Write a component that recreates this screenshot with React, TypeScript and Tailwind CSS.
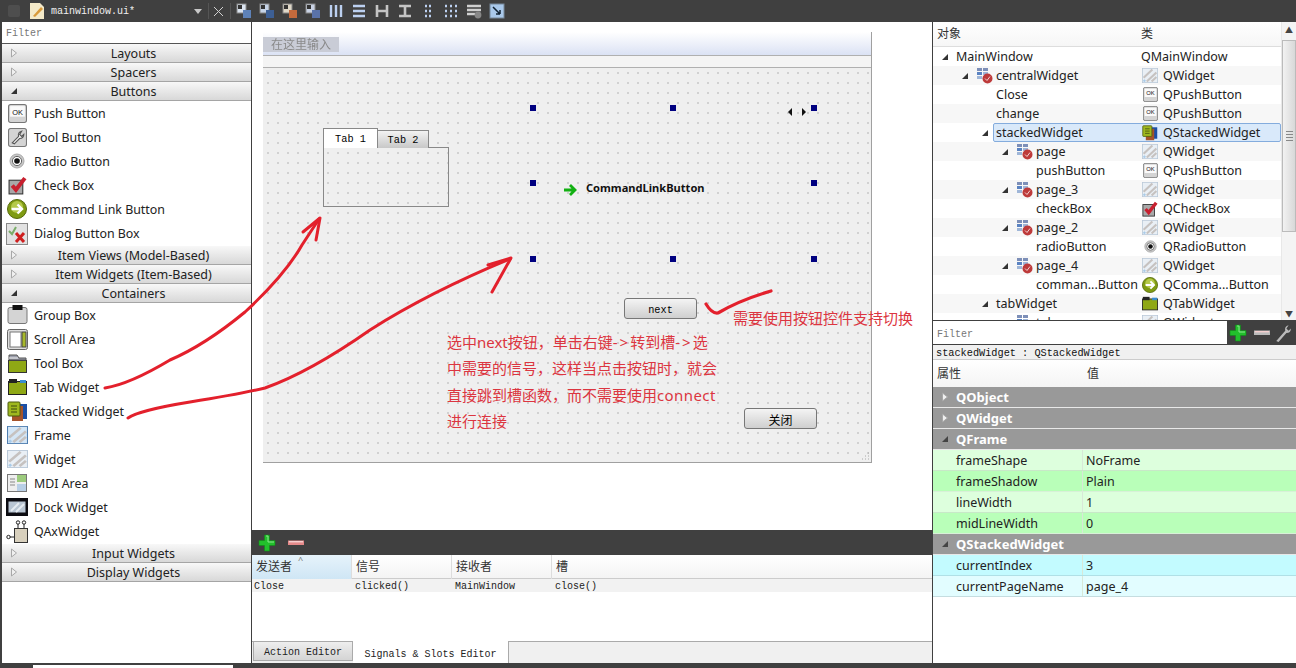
import React from "react";

const ui = "font-['Noto_Sans','Noto_Sans_CJK_SC',sans-serif]";

const Tri = ({ open, dim }: { open?: boolean; dim?: boolean }) =>
  open ? (
    <svg width="8" height="8" viewBox="0 0 8 8" className="shrink-0"><path d="M7 1V7H1Z" fill={dim ? "#444" : "#333"} /></svg>
  ) : (
    <svg width="8" height="10" viewBox="0 0 8 10" className="shrink-0"><path d="M1.5 1L6.5 5L1.5 9Z" fill="#f0f0f0" stroke="#a8a8a8" /></svg>
  );

const IconOK = ({ s = 19 }: { s?: number }) => (
  <svg width={s} height={s} viewBox="0 0 18 18"><rect x=".5" y=".5" width="17" height="17" rx="2" fill="#d4d4d4" stroke="#777" /><rect x="2" y="2" width="14" height="10" fill="#fafafa" /><text x="9" y="10" fontSize="7" fontFamily="Liberation Sans" textAnchor="middle" fill="#111">OK</text></svg>
);
const IconTool = () => (
  <svg width="19" height="19" viewBox="0 0 18 18"><rect x=".5" y=".5" width="17" height="17" rx="2" fill="#d4d4d4" stroke="#777" /><path d="M4 14L10 8Q9 4 13 3L11 6L13 8L15 6Q15 10 11 10L6 15Z" fill="#eee" stroke="#555" /></svg>
);
const IconRadio = ({ s = 16 }: { s?: number }) => (
  <svg width={s} height={s} viewBox="0 0 16 16"><circle cx="8" cy="8" r="7" fill="#c8c8c8" stroke="#aaa" /><circle cx="8" cy="8" r="4.6" fill="#fff" stroke="#666" /><circle cx="8" cy="8" r="2.8" fill="#111" /></svg>
);
const IconCheck = ({ s = 19 }: { s?: number }) => (
  <svg width={s} height={s} viewBox="0 0 18 18"><rect x="1" y="4" width="13" height="13" fill="#a8a8a8" stroke="#333" /><path d="M4 9L7.5 13L16 2" fill="none" stroke="#c8202f" strokeWidth="3.8" /></svg>
);
const IconCmd = ({ s = 20 }: { s?: number }) => (
  <svg width={s} height={s} viewBox="0 0 20 20"><circle cx="10" cy="10" r="9.5" fill="#7f9b12" stroke="#56690c" /><circle cx="10" cy="8" r="6" fill="#b5c94a" /><path d="M4.5 10H14M10.5 5.5L15 10L10.5 14.5" fill="none" stroke="#fff" strokeWidth="2.4" /></svg>
);
const IconDialog = () => (
  <svg width="22" height="22" viewBox="0 0 22 22"><rect x=".5" y=".5" width="21" height="21" fill="#e2e2e2" stroke="#888" /><path d="M3 8L6 11L10 4" fill="none" stroke="#79ad68" strokeWidth="2" /><path d="M10 10L18 19M18 10L10 19" stroke="#cf1f1f" strokeWidth="3" /></svg>
);
const IconGroup = () => (
  <svg width="21" height="20" viewBox="0 0 20 20"><rect x=".5" y="2.5" width="19" height="16" rx="2" fill="#d4d4d4" stroke="#777" /><rect x="5" y="0" width="10" height="5" fill="#111" /></svg>
);
const IconScroll = () => (
  <svg width="21" height="21" viewBox="0 0 21 21"><rect x=".5" y=".5" width="20" height="20" rx="2" fill="#ddd" stroke="#666" /><rect x="3" y="3" width="11" height="15" fill="#fff" stroke="#777" /><rect x="15" y="3" width="4" height="15" fill="#a8b92a" stroke="#444" /></svg>
);
const IconToolBox = () => (
  <svg width="19" height="19" viewBox="0 0 19 19"><rect x=".5" y="6.5" width="18" height="12" fill="#8fa815" stroke="#333" /><path d="M1 1H9L11 4H18V6H1Z" fill="#9da0ad" stroke="#555" /><path d="M1 4H10" stroke="#eee" /></svg>
);
const IconTab = ({ s = 19 }: { s?: number }) => (
  <svg width={s} height={s} viewBox="0 0 19 19"><rect x=".5" y="3.5" width="18" height="13" fill="#8fa815" stroke="#222" /><rect x="1" y="1" width="8" height="4" fill="#222" /><rect x="12" y="2" width="6" height="3" fill="#3b8ed0" /></svg>
);
const IconStack = ({ s = 21 }: { s?: number }) => (
  <svg width={s} height={s} viewBox="0 0 21 21"><rect x="10" y="3" width="10" height="15" fill="#1c4fa5" /><rect x="5" y="5" width="11" height="15" fill="#a6532a" /><rect x="1" y="1" width="12" height="14" rx="1" fill="#9fb81f" stroke="#4c5a10" /><path d="M4 5H10M4 8H10M4 11H10" stroke="#3f4a12" /></svg>
);
const Hatch = ({ frame, w = 21, h = 18 }: { frame?: boolean; w?: number; h?: number }) => (
  <svg width={w} height={h} viewBox="0 0 20 20" preserveAspectRatio="none">
    <rect x=".5" y=".5" width="19" height="19" fill={frame ? "#d4e6f6" : "#e9eff5"} stroke={frame ? "#4f7eb0" : "#b9c8d8"} />
    <path d="M2 13L13 2M6 18L18 6M12 18L18 12" stroke="#c6c2c0" strokeWidth="2.6" />
    <path d="M2 18L4 16" stroke="#a9cbe8" strokeWidth="2.6" />
  </svg>
);
const IconMdi = () => (
  <svg width="20" height="20" viewBox="0 0 20 20"><rect x=".5" y="1.5" width="19" height="17" fill="#eee" stroke="#777" /><rect x="10" y="2" width="9" height="7" fill="#9ccb7d" /><rect x="10" y="11" width="9" height="7" fill="#b8cfe6" /><path d="M3 6H8M3 9H8M3 12H8" stroke="#888" /></svg>
);
const IconDock = () => (
  <svg width="22" height="18" viewBox="0 0 22 18"><rect width="22" height="18" fill="#0c0c12" /><rect x="2.5" y="3.5" width="17" height="11" fill="#b9c6d4" /><path d="M5 13L13 5M10 14L18 6" stroke="#e6ecf2" strokeWidth="2" /></svg>
);
const IconAx = () => (
  <svg width="23" height="24" viewBox="0 0 23 24"><rect x="8.5" y="8.5" width="13" height="14" fill="#d8d0bd" stroke="#333" /><path d="M12 8V3M18 8V3M8 17H3" stroke="#222" /><circle cx="12" cy="2.5" r="1.7" fill="#fff" stroke="#222" /><circle cx="18" cy="2.5" r="1.7" fill="#fff" stroke="#222" /><circle cx="2.5" cy="17" r="1.7" fill="#fff" stroke="#222" /></svg>
);
const IconPage = () => (
  <svg width="17" height="17" viewBox="0 0 17 17"><rect x="1" y="1" width="5" height="3" fill="#7d8fb8" /><rect x="7" y="1" width="5" height="3" fill="#7d8fb8" /><rect x="1" y="5" width="5" height="3" fill="#5a83c2" /><rect x="7" y="5" width="5" height="3" fill="#9fb6d8" /><rect x="1" y="9" width="5" height="3" fill="#9fb6d8" /><circle cx="11.5" cy="11.5" r="5" fill="#bd3a3a" /><path d="M9 11.5L11 13.5L14 9.5" fill="none" stroke="#f4d0d0" /></svg>
);

const Cat = ({ label, open }: { label: string; open?: boolean }) => (
  <div className="flex h-[19px] items-center border-b border-[#a5a5a5] bg-gradient-to-b from-[#f8f8f8] to-[#d8d8d8] pl-2">
    <span className="mr-[6px] flex w-[8px] shrink-0"><Tri open={open} /></span>
    <span className="flex-1 pr-[8px] pt-[2px] text-center text-[12.5px] leading-none text-[#222]">{label}</span>
  </div>
);

const Item = ({ icon, label, h = 24 }: { icon: React.ReactNode; label: string; h?: number }) => (
  <div className="flex items-center" style={{ height: h }}>
    <div className="mr-[2px] flex w-[30px] shrink-0 justify-center">{icon}</div>
    <span className="pt-[2px] text-[12.4px] leading-none text-[#222]">{label}</span>
  </div>
);

const treeRows: [number, boolean, React.ReactNode, string, React.ReactNode, string][] = [
  [1, true, null, "MainWindow", null, "QMainWindow"],
  [2, true, <IconPage />, "centralWidget", <Hatch w={16} h={15} />, "QWidget"],
  [3, false, null, "Close", <IconOK s={15} />, "QPushButton"],
  [3, false, null, "change", <IconOK s={15} />, "QPushButton"],
  [3, true, null, "stackedWidget", <IconStack s={16} />, "QStackedWidget"],
  [4, true, <IconPage />, "page", <Hatch w={16} h={15} />, "QWidget"],
  [5, false, null, "pushButton", <IconOK s={15} />, "QPushButton"],
  [4, true, <IconPage />, "page_3", <Hatch w={16} h={15} />, "QWidget"],
  [5, false, null, "checkBox", <IconCheck s={16} />, "QCheckBox"],
  [4, true, <IconPage />, "page_2", <Hatch w={16} h={15} />, "QWidget"],
  [5, false, null, "radioButton", <IconRadio s={13} />, "QRadioButton"],
  [4, true, <IconPage />, "page_4", <Hatch w={16} h={15} />, "QWidget"],
  [5, false, null, "comman...Button", <IconCmd s={16} />, "QComma...Button"],
  [3, true, null, "tabWidget", <IconTab s={16} />, "QTabWidget"],
  [4, true, <IconPage />, "tab", <Hatch w={16} h={15} />, "QWidget"],
];

const toolIcons = [
  ["#5e82b8", "#dbe4f0"], ["#3d5f94", "#c6d4e8"], ["#c46a3c", "#e0d8c8"], ["#5a72a8", "#c9d2e4"],
];

const ToolGlyph = ({ i }: { i: number }) => {
  if (i < 4)
    return (
      <svg width="16" height="16" viewBox="0 0 16 16">
        <rect x="1" y="1" width="9" height="9" fill={toolIcons[i][1]} stroke="#888" />
        <rect x="7" y="7" width="8" height="8" fill={toolIcons[i][0]} />
        <rect x="2" y="2" width="4" height="4" fill="#333" />
      </svg>
    );
  const c = "#bcd0f0";
  const map: Record<number, React.ReactNode> = {
    4: <path d="M3 2V14M8 2V14M13 2V14" stroke={c} strokeWidth="2.4" />,
    5: <path d="M2 3H14M2 8H14M2 13H14" stroke={c} strokeWidth="2.4" />,
    6: <path d="M3 2V14M13 2V14M3 8H13" stroke="#c4c4c4" strokeWidth="2.6" />,
    7: <path d="M2 3H14M2 13H14M8 3V13" stroke="#c4c4c4" strokeWidth="2.6" />,
    8: <path d="M5 3H7M9 3H11M5 8H7M9 8H11M5 13H7M9 13H11" stroke={c} strokeWidth="2.6" />,
    9: <path d="M2 3H4M7 3H9M12 3H14M2 8H4M7 8H9M12 8H14M2 13H4M7 13H9M12 13H14" stroke={c} strokeWidth="2.6" />,
    10: <g><path d="M1 3H15M1 7H15M1 11H9" stroke="#d0d0d0" strokeWidth="2.4" /><circle cx="12" cy="12" r="3.4" fill="#888" /></g>,
    11: <g><rect x="1" y="1" width="14" height="14" fill="#a9c8ea" stroke="#789" /><path d="M4 4L11 11M11 11V7M11 11H7" stroke="#123" strokeWidth="1.5" fill="none" /></g>,
  };
  return <svg width="16" height="16" viewBox="0 0 16 16">{map[i]}</svg>;
};

const Plus = () => (
  <svg width="18" height="18" viewBox="0 0 18 18"><path d="M6.5 1H11.5V6.5H17V11.5H11.5V17H6.5V11.5H1V6.5H6.5Z" fill="#22c02c" stroke="#118a1a" strokeWidth=".6" /><path d="M8 2H10V8H16" stroke="#8be58e" fill="none" /></svg>
);
const Minus = ({ c = "#e58a8a" }: { c?: string }) => (
  <svg width="18" height="18" viewBox="0 0 18 18"><rect x="1" y="6.5" width="16" height="4.5" fill={c} /><rect x="2" y="7" width="14" height="1.4" fill="#f6d0d0" /></svg>
);

const Prop = ({ n, v, alt, cy }: { n: string; v: string; alt?: boolean; cy?: boolean }) => (
  <div className={`grid h-[21px] grid-cols-[149px_1fr] items-center border-b text-[12.5px] leading-none text-[#222] ${cy ? (alt ? "bg-[#e2fdff] border-[#c5dde0]" : "bg-[#c3fbff] border-[#b0e0e6]") : alt ? "bg-[#b9ffb9] border-[#d8f0d8]" : "bg-[#ddffdd] border-[#c8e8c8]"}`}>
    <span className="pl-[23px] pt-[3px]">{n}</span>
    <span className="flex h-full items-center border-l border-[#d8e8d8] pl-[3px] pt-[3px]">{v}</span>
  </div>
);
const Group = ({ n, open }: { n: string; open?: boolean }) => (
  <div className="flex h-[21px] items-center border-b border-[#e8e8e8] bg-[#999] pl-[8px] text-[13px] font-bold leading-none text-white">
    <span className="flex w-[15px]"><Tri open={open} dim /></span>
    {n}
  </div>
);

const Handle = ({ c }: { c: string }) => <div className={`absolute h-[6px] w-[6px] bg-[#000080] ${c}`} />;

const mono = "font-['Liberation_Mono','Noto_Sans_CJK_SC',monospace]";

export default function App() {
  return (
    <div className={`relative flex h-[668px] w-[1296px] flex-col overflow-hidden bg-[#404040] ${ui}`}>
      {/* Top toolbar */}
      <div className="flex h-[22px] shrink-0 items-center">
        <div className="ml-[8px] h-[12px] w-[12px] rounded-[2px] bg-[#4e4e4e]" />
        <svg className="ml-[9px]" width="16" height="18" viewBox="0 0 16 18"><path d="M1 1H11L15 5V17H1Z" fill="#f4e9c8" /><path d="M4 14L12 5L14 7L6 15Z" fill="#d99a3a" /></svg>
        <span className={`ml-[6px] w-[143px] pt-[2px] text-[10px] leading-none text-[#f0f0f0] ${mono}`}>mainwindow.ui*</span>
        <svg width="8" height="5" viewBox="0 0 8 5"><path d="M0 0H8L4 5Z" fill="#c8c8c8" /></svg>
        <div className="ml-[6px] h-[16px] w-px bg-[#555]" />
        <svg className="ml-[4px]" width="11" height="11" viewBox="0 0 11 11"><path d="M1 1L10 10M10 1L1 10" stroke="#d0d0d0" /></svg>
        <div className="ml-[6px] mr-[5px] h-[16px] w-px bg-[#555]" />
        <div className="flex gap-[7px]">
          {Array.from({ length: 12 }, (_, i) => <ToolGlyph key={i} i={i} />)}
        </div>
      </div>

      <div className="flex min-h-0 flex-1 pl-[2px]">
        {/* Widget box */}
        <div className="flex w-[249px] shrink-0 flex-col bg-white">
          <div className={`flex h-[22px] items-center border-b border-[#555] pl-[4px] pt-[2px] text-[10px] leading-none text-[#777] ${mono}`}>Filter</div>
          <div className="flex-1">
            <Cat label="Layouts" />
            <Cat label="Spacers" />
            <Cat label="Buttons" open />
            <Item icon={<IconOK />} label="Push Button" />
            <Item icon={<IconTool />} label="Tool Button" />
            <Item icon={<IconRadio />} label="Radio Button" />
            <Item icon={<IconCheck />} label="Check Box" />
            <Item icon={<IconCmd />} label="Command Link Button" />
            <Item icon={<IconDialog />} label="Dialog Button Box" h={25} />
            <Cat label="Item Views (Model-Based)" />
            <Cat label="Item Widgets (Item-Based)" />
            <Cat label="Containers" open />
            <Item icon={<IconGroup />} label="Group Box" />
            <Item icon={<IconScroll />} label="Scroll Area" />
            <Item icon={<IconToolBox />} label="Tool Box" />
            <Item icon={<IconTab />} label="Tab Widget" />
            <Item icon={<IconStack />} label="Stacked Widget" />
            <Item icon={<Hatch frame />} label="Frame" />
            <Item icon={<Hatch />} label="Widget" />
            <Item icon={<IconMdi />} label="MDI Area" />
            <Item icon={<IconDock />} label="Dock Widget" />
            <Item icon={<IconAx />} label="QAxWidget" h={25} />
            <Cat label="Input Widgets" />
            <Cat label="Display Widgets" />
          </div>
        </div>

        {/* Centre */}
        <div className="ml-px flex w-[680px] shrink-0 flex-col bg-white">
          <div className="relative h-[508px] shrink-0">
            {/* Form canvas */}
            <div className="absolute left-[11px] top-[10px] h-[431px] w-[609px] border-b border-r border-[#a0a0a0] bg-[#efefef]">
              <div className="flex h-[23px] items-start bg-gradient-to-b from-white to-[#dbe2f4] pt-[5px]">
                <span className="bg-[#c9ccd6] px-[8px] text-[12px] leading-[15px] text-[#8a8a8a] blur-[0.5px]">在这里输入</span>
              </div>
              <div className="h-[13px] border-b border-t border-[#b0b0b0] bg-[#f4f4f4]" />
              <div className="relative h-[394px] bg-[radial-gradient(circle_at_5px_5px,#d0d0d0_0.7px,transparent_1px)] bg-[length:10px_10px]">
                <div className="absolute left-[60px] top-[60px] h-[79px] w-[126px]">
                  <div className="flex h-[20px] items-end">
                    <div className={`z-10 flex h-[20px] w-[55px] items-center justify-center border border-b-0 border-[#888] bg-white pt-[2px] text-[10.25px] text-black ${mono}`}>Tab 1</div>
                    <div className={`flex h-[18px] w-[51px] items-center justify-center border border-b-0 border-l-0 border-[#888] bg-gradient-to-b from-[#f2f2f2] to-[#c8c8c8] pt-[2px] text-[10.25px] text-black ${mono}`}>Tab 2</div>
                  </div>
                  <div className="-mt-px h-[60px] border border-[#888]" />
                </div>
                <Handle c="left-[267px] top-[37px]" />
                <Handle c="left-[407px] top-[37px]" />
                <Handle c="left-[548px] top-[37px]" />
                <Handle c="left-[267px] top-[112px]" />
                <Handle c="left-[548px] top-[112px]" />
                <Handle c="left-[267px] top-[188px]" />
                <Handle c="left-[407px] top-[188px]" />
                <Handle c="left-[548px] top-[188px]" />
                <svg className="absolute left-[524px] top-[40px]" width="20" height="8" viewBox="0 0 20 8"><path d="M5 0V8L1 4ZM15 0V8L19 4Z" fill="#111" /></svg>
                <svg className="absolute left-[300px] top-[115px]" width="14" height="14" viewBox="0 0 14 14"><path d="M1 7H11M7 2L12 7L7 12" fill="none" stroke="#12b012" strokeWidth="2.8" /></svg>
                <span className="absolute left-[323px] top-[112px] text-[11.1px] font-bold leading-[16px] text-[#111]">CommandLinkButton</span>
                <div className={`absolute left-[361px] top-[230px] flex h-[21px] w-[73px] items-center justify-center rounded-[3px] border border-[#777] bg-gradient-to-b from-[#f4f4f4] to-[#cfcfcf] pt-[4px] text-[10.25px] text-black ${mono}`}>next</div>
                <div className="absolute left-[481px] top-[340px] flex h-[21px] w-[73px] items-center justify-center rounded-[3px] border border-[#777] bg-gradient-to-b from-[#f4f4f4] to-[#cfcfcf] pt-[4px] text-[12px] text-black">关闭</div>
                <svg className="absolute bottom-[1px] right-[1px]" width="9" height="9" viewBox="0 0 9 9"><path d="M7 1H8M4 4H5M7 4H8M1 7H2M4 7H5M7 7H8" stroke="#aaa" /></svg>
              </div>
            </div>
          </div>

          <div className="flex h-[25px] shrink-0 items-center bg-[#404040] pl-[6px]">
            <Plus />
            <span className="ml-[11px]"><Minus /></span>
          </div>
          <div className="grid h-[24px] shrink-0 grid-cols-[100px_100px_100px_1fr] border-b border-[#ccc] bg-gradient-to-b from-white to-[#f4f4f4] text-[12px] leading-[24px] text-[#333]">
            <span className="relative border-r border-[#ddd] bg-gradient-to-b from-[#e6f3fb] to-[#cfe6f5] pl-[4px]">发送者<span className="absolute left-[46px] top-[-7px] text-[9px] text-[#777]">^</span></span>
            <span className="border-r border-[#ddd] pl-[4px]">信号</span>
            <span className="border-r border-[#ddd] pl-[4px]">接收者</span>
            <span className="pl-[4px]">槽</span>
          </div>
          <div className={`grid h-[13px] shrink-0 grid-cols-[100px_100px_100px_1fr] bg-[#f2f2f2] text-[10px] leading-[16px] text-[#222] ${mono}`}>
            <span className="pl-[2px]">Close</span>
            <span className="pl-[3px]">clicked()</span>
            <span className="pl-[3px]">MainWindow</span>
            <span className="pl-[3px]">close()</span>
          </div>
          <div className="flex-1" />
          <div className="flex h-[22px] shrink-0 items-start border-t border-[#aaa] bg-[#f0f0f0]">
            <div className={`ml-px flex h-[19px] w-[100px] items-center justify-center border border-t-0 border-[#aaa] bg-gradient-to-b from-[#eee] to-[#d4d4d4] pt-[3px] text-[10px] text-[#222] ${mono}`}>Action Editor</div>
            <div className={`-mt-px flex h-[22px] w-[156px] items-center justify-center border-r border-[#aaa] bg-white pt-[4px] text-[10px] text-[#222] ${mono}`}>Signals &amp; Slots Editor</div>
          </div>
        </div>

        {/* Right */}
        <div className="ml-px flex min-w-0 flex-1 flex-col bg-white">
          <div className="flex h-[298px] shrink-0">
            <div className="min-w-0 flex-1 overflow-hidden">
              <div className="grid h-[25px] grid-cols-[204px_1fr] items-center border-b border-[#ddd] bg-gradient-to-b from-white to-[#f6f6f6] pl-[4px] text-[12px] leading-none text-[#333]">
                <span>对象</span><span>类</span>
              </div>
              {treeRows.map(([lvl, exp, ic, name, cIc, cls], i) => {
                const selected = i === 4;
                return (
                  <div key={i} className={`relative grid h-[19px] grid-cols-[208px_1fr] items-center text-[12.5px] leading-none text-[#222] ${i % 2 === 1 ? "bg-[#f7f7f7]" : "bg-white"}`}>
                    {selected && <div className="absolute left-[60px] right-0 top-0 h-[19px] rounded-[2px] border border-[#84acdd] bg-[#d9e9fa]" />}
                    <div className="relative flex items-center" style={{ paddingLeft: (lvl - 1) * 20 + 8 }}>
                      <span className="flex w-[15px] shrink-0">{exp && <Tri open />}</span>
                      {ic && <span className="mr-[3px] flex">{ic}</span>}
                      <span className="whitespace-nowrap pt-[2px]">{name}</span>
                    </div>
                    <div className="relative flex items-center gap-[4px] whitespace-nowrap">
                      {cIc && <span className="flex w-[18px] justify-center">{cIc}</span>}
                      <span className="pt-[2px]">{cls}</span>
                    </div>
                  </div>
                );
              })}
            </div>
            <div className="flex w-[15px] shrink-0 flex-col border-l border-[#e8e8e8] bg-[#f4f4f4]">
              <div className="h-[18px] text-center text-[8px] leading-[16px] text-[#444]">▲</div>
              <div className="flex h-[192px] flex-col items-center justify-center gap-[2px] border border-[#bbb] bg-gradient-to-r from-[#f2f2f2] to-[#d8d8d8]">
                <div className="h-px w-[7px] bg-[#888]" />
                <div className="h-px w-[7px] bg-[#888]" />
                <div className="h-px w-[7px] bg-[#888]" />
                <div className="h-px w-[7px] bg-[#888]" />
              </div>
              <div className="flex-1" />
              <div className="h-[13px] text-center text-[8px] leading-[13px] text-[#444]">▼</div>
            </div>
          </div>
          <div className="flex h-[25px] shrink-0 items-center bg-[#404040]">
            <div className={`flex h-[23px] w-[294px] items-center bg-white pl-[4px] pt-[4px] text-[10px] leading-none text-[#777] ${mono}`}>Filter</div>
            <span className="ml-[2px] flex"><Plus /></span>
            <span className="ml-[6px] flex"><Minus c="#bbb" /></span>
            <svg className="ml-[3px]" width="18" height="18" viewBox="0 0 16 16"><path d="M2 15L10 6Q9 2 13 1L11 4L13 6L15 4Q15 8 11 8L4 16Z" fill="#bbb" /></svg>
          </div>
          <div className={`flex h-[15px] shrink-0 items-center border-b border-[#ccc] bg-[#f0f0f0] pl-[3px] pt-[3px] text-[10.25px] leading-none text-[#111] ${mono}`}>stackedWidget : QStackedWidget</div>
          <div className="grid h-[27px] shrink-0 grid-cols-[150px_1fr] items-center bg-gradient-to-b from-white to-[#f4f4f4] pl-[4px] text-[12px] leading-none text-[#333]">
            <span>属性</span><span>值</span>
          </div>
          <Group n="QObject" />
          <Group n="QWidget" />
          <Group n="QFrame" open />
          <Prop n="frameShape" v="NoFrame" />
          <Prop n="frameShadow" v="Plain" alt />
          <Prop n="lineWidth" v="1" />
          <Prop n="midLineWidth" v="0" alt />
          <Group n="QStackedWidget" open />
          <Prop n="currentIndex" v="3" cy />
          <Prop n="currentPageName" v="page_4" cy alt />
        </div>
      </div>

      {/* Bottom edge */}
      <div className="h-[5px] shrink-0 pl-[33px] pt-[2px]">
        <div className="h-[3px] w-[200px] bg-white" />
      </div>

      {/* Hand-drawn annotations over everything */}
      <svg className="pointer-events-none absolute left-0 top-0" width="1296" height="668" viewBox="0 0 1296 668">
        <g fill="none" stroke="#e3202c" strokeWidth="3" strokeLinecap="round" strokeLinejoin="round">
          <path d="M105 388Q130 384 170 360Q205 345 245 312Q285 275 302 245L319 219" />
          <path d="M303 232L320 218L316 240" />
          <path d="M128 418Q140 410 190 402Q240 394 265 388Q310 372 370 330Q430 292 510 259" />
          <path d="M488 265L511 258L492 292" />
          <path d="M706 304Q712 314 718 313Q740 300 771 291" strokeWidth="3.2" />
        </g>
      </svg>
      <div className="pointer-events-none absolute left-[447px] top-[329px] whitespace-nowrap text-[15px] leading-[26.4px] text-[#dc3540]">
        选中next按钮，单击右键<span className="tracking-[2px]">-&gt;</span>转到槽<span className="tracking-[2px]">-&gt;</span>选<br />中需要的信号，这样当点击按钮时，就会<br />直接跳到槽函数，而不需要使用<span className="tracking-[0.4px]">connect</span><br />进行连接
      </div>
      <div className="pointer-events-none absolute left-[733px] top-[308px] text-[15px] leading-[20px] text-[#dc3540]">需要使用按钮控件支持切换</div>
    </div>
  );
}
